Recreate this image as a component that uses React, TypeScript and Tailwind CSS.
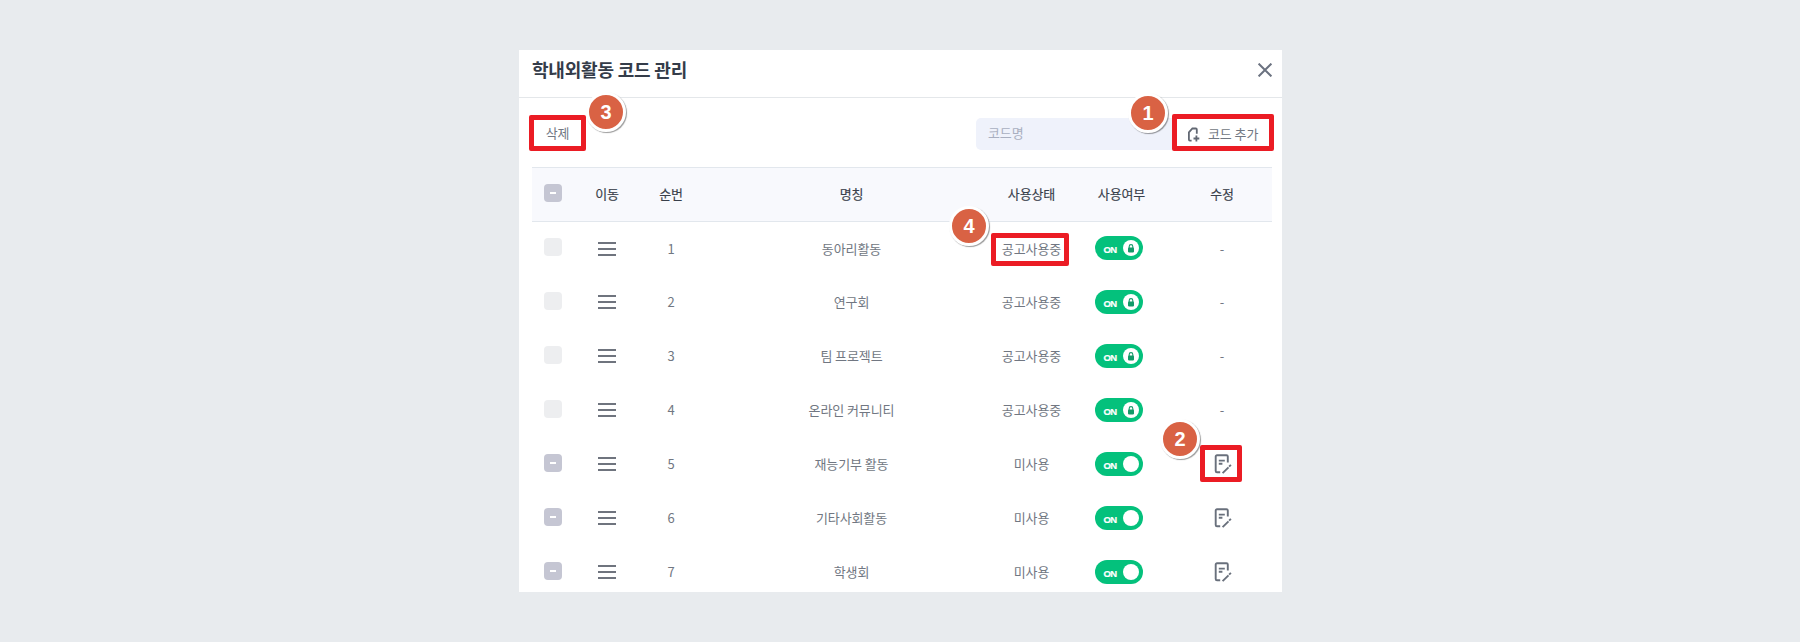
import React from "react";

type Row = { n: number; name: string; used: boolean };

const rows: Row[] = [
  { n: 1, name: "동아리활동", used: true },
  { n: 2, name: "연구회", used: true },
  { n: 3, name: "팀 프로젝트", used: true },
  { n: 4, name: "온라인 커뮤니티", used: true },
  { n: 5, name: "재능기부 활동", used: false },
  { n: 6, name: "기타사회활동", used: false },
  { n: 7, name: "학생회", used: false },
];

const columns = "grid grid-cols-[42px_66px_62px_299px_61px_114px_92px] items-center justify-items-center";

function Badge({ n, place }: { n: number; place: string }) {
  return (
    <span
      className={`absolute z-20 flex h-10 w-10 items-center justify-center rounded-full border-[3px] border-white bg-[#d96244] font-['Liberation_Sans'] text-[20px] leading-none font-bold text-white shadow-[1px_1px_1px_rgba(0,0,0,0.4)] ${place}`}
    >
      {n}
    </span>
  );
}

function Mark({ place }: { place: string }) {
  return <span className={`absolute z-10 rounded-[2px] border-5 border-[#eb1c24] ${place}`} />;
}

function Check({ disabled }: { disabled?: boolean }) {
  return (
    <span className={`flex h-[18px] w-[18px] items-center justify-center rounded-[4px] ${disabled ? "bg-[#edeef0]" : "bg-[#c5c6d3]"}`}>
      {!disabled && <span className="h-[2px] w-[6px] bg-white" />}
    </span>
  );
}

function Handle({ first }: { first: boolean }) {
  return (
    <span className={`flex w-[18px] flex-col gap-1 ${first ? "" : "mb-[2px]"}`}>
      <span className="h-[2px] bg-[#6f747e]" />
      <span className="h-[2px] bg-[#6f747e]" />
      <span className="h-[2px] bg-[#6f747e]" />
    </span>
  );
}

function Toggle({ locked }: { locked: boolean }) {
  return (
    <span className="flex h-6 w-12 items-center justify-between rounded-full bg-[#04c17c] pr-1 pl-[8.5px]">
      <span className="pt-[3px] font-['Liberation_Sans'] text-[9.5px] leading-none font-bold tracking-[-0.7px] text-white [-webkit-text-stroke:0.2px_#fff]">ON</span>
      <span className="flex h-4 w-4 items-center justify-center rounded-full bg-white">
        {locked && (
          <svg width="8" height="9" viewBox="0 0 8 9" fill="none">
            <path d="M2.2 4V2.4a1.8 1.8 0 0 1 3.6 0V4" stroke="#129a68" strokeWidth="1.1" />
            <rect x="1" y="3.4" width="6" height="5" rx="0.8" fill="#129a68" />
          </svg>
        )}
      </span>
    </span>
  );
}

function EditIcon() {
  return (
    <svg className="mb-[2px] ml-px" width="18" height="20" viewBox="0 0 18 20" fill="none" stroke="#69707c" strokeWidth="1.9">
      <path d="M6.2 18.2H3A1.3 1.3 0 0 1 1.700 16.900V2.500A1.300 1.300 0 0 1 3 1.200H12.500a1.300 1.300 0 0 1 1.300 1.300V8.600" />
      <path d="M4.800 6.600h6M4.800 9.800h3.600M8.600 19.200l5.900-5.900M15.100 12.700l1.800-1.800" />
    </svg>
  );
}

export default function App() {
  return (
    <div className="flex h-[642px] w-[1800px] bg-[#e8ebee] pt-[50px] pl-[519px] font-['Noto_Sans_CJK_KR','Noto_Sans_CJK_JP',sans-serif] text-[13px] tracking-[-0.1px] text-[#717782]">
      <main className="relative flex h-[542px] w-[763px] flex-col overflow-hidden bg-white">
        <header className="flex h-12 shrink-0 items-center justify-between border-b border-[#e4e7ea] pr-[10px] pb-[7px] pl-[13px]">
          <h1 className="mb-[2px] text-[18px] leading-none font-bold tracking-[-0.2px] text-[#343c49]">학내외활동 코드 관리</h1>
          <svg width="14" height="14" viewBox="0 0 14 14" stroke="#6b7280" strokeWidth="2">
            <path d="M.6.6l12.800 12.800M13.400.6L.6 13.400" />
          </svg>
        </header>

        <div className="flex h-[69px] shrink-0 items-start justify-between pt-5 pr-2 pl-[15px]">
          <button className="h-8 w-[47px] pb-[2px] leading-[30px]">삭제</button>
          <div className="flex">
            <div className="h-8 w-[200px] rounded-l-[5px] bg-[#eff2fb] pl-3 leading-[30px] text-[#a9afc0]">코드명</div>
            <button className="flex h-8 w-[98px] items-center pl-[11px]">
              <svg className="mr-2" width="13" height="15" viewBox="0 0 13 15" fill="none" stroke="#626873" strokeWidth="1.800">
                <path d="M4.600 13.600H2.900a1 1 0 0 1-1-1V5.300L5.400 1.500H8.800a1 1 0 0 1 1 1V6.800M9.400 8.600v5.800M6.500 11.500h5.800" />
              </svg>
              <span className="mb-[2px] leading-none">코드 추가</span>
            </button>
          </div>
        </div>

        <div className="ml-[13px] w-[740px] shrink-0">
          <div className={`${columns} h-[55px] border-y border-[#e2e7ed] bg-[#f8f9fd] pb-[2px] leading-none text-[#383f4b] [-webkit-text-stroke:0.15px_#383f4b]`}>
            <span className="-mt-px"><Check /></span>
            <span>이동</span>
            <span>순번</span>
            <span>명칭</span>
            <span className="whitespace-nowrap">사용상태</span>
            <span className="ml-[5px]">사용여부</span>
            <span>수정</span>
          </div>
          {rows.map((r) => {
            const lift = r.n === 1 ? "mb-px" : "mb-[3px]";
            return (
              <div key={r.n} className={`${columns} h-[54px] leading-none`}>
                <span className="-mt-1"><Check disabled={r.used} /></span>
                <Handle first={r.n === 1} />
                <span className={lift}>{r.n}</span>
                <span className={lift}>{r.name}</span>
                <span className={`whitespace-nowrap ${lift}`}>{r.used ? "공고사용중" : "미사용"}</span>
                <span className="-mt-[2px]"><Toggle locked={r.used} /></span>
                {r.used ? <span className={lift}>-</span> : <EditIcon />}
              </div>
            );
          })}
        </div>

        <Mark place="top-[65px] left-[10px] h-[36px] w-[57px]" />
        <Mark place="top-[64px] left-[653px] h-[37px] w-[102px]" />
        <Mark place="top-[183px] left-[472px] h-[33px] w-[78px]" />
        <Mark place="top-[395px] left-[681px] h-[37px] w-[42px]" />
        <Badge n={3} place="top-[42px] left-[67px]" />
        <Badge n={1} place="top-[43px] left-[609px]" />
        <Badge n={4} place="top-[156px] left-[430px]" />
        <Badge n={2} place="top-[369px] left-[641px]" />
      </main>
    </div>
  );
}
